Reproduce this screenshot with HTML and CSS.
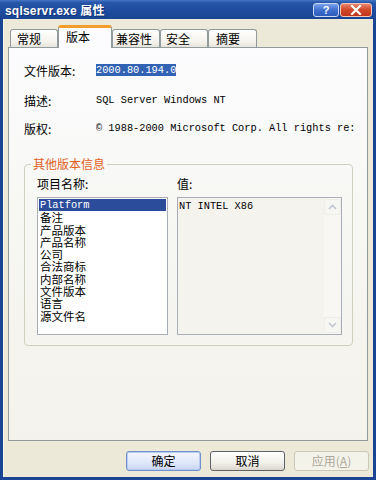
FILE: index.html
```html
<!DOCTYPE html>
<html lang="zh-CN">
<head>
<meta charset="utf-8">
<title>sqlservr.exe 属性</title>
<link rel="stylesheet" href="styles.css">
</head>
<body>
<div class="window">
  <div class="titlebar">
    <span class="title">sqlservr.exe 属性</span>
    <div class="tb-buttons">
      <span class="tb-btn help">?</span>
      <span class="tb-btn close"><svg width="12" height="10" viewBox="0 0 12 10"><path d="M2 1 L10 9 M10 1 L2 9" stroke="#fff" stroke-width="2.2" stroke-linecap="square"/></svg></span>
    </div>
  </div>
  <div class="frame">
    <div class="tabs">
      <div class="tab t1">常规</div>
      <div class="tab active">版本</div>
      <div class="tab t3">兼容性</div>
      <div class="tab t4">安全</div>
      <div class="tab t5">摘要</div>
    </div>
    <div class="panel">
      <div class="info">
        <div class="row r1"><span class="lbl">文件版本:</span><span class="val"><span class="sel">2000.80.194.0</span></span></div>
        <div class="row r2"><span class="lbl">描述:</span><span class="val">SQL Server Windows NT</span></div>
        <div class="row r3"><span class="lbl">版权:</span><span class="val">© 1988-2000 Microsoft Corp. All rights re:</span></div>
      </div>
      <fieldset class="group">
        <legend>其他版本信息</legend>
        <div class="cols">
          <div class="col">
            <div class="col-lbl">项目名称:</div>
            <div class="listbox">
              <div class="item selected">Platform</div>
              <div class="item">备注</div>
              <div class="item">产品版本</div>
              <div class="item">产品名称</div>
              <div class="item">公司</div>
              <div class="item">合法商标</div>
              <div class="item">内部名称</div>
              <div class="item">文件版本</div>
              <div class="item">语言</div>
              <div class="item">源文件名</div>
            </div>
          </div>
          <div class="col">
            <div class="col-lbl">值:</div>
            <div class="valbox">
              <div class="valtext">NT INTEL X86</div>
              <div class="scroll">
                <span class="arrow"><svg width="9" height="6" viewBox="0 0 9 6"><path d="M1 5 L4.5 1.5 L8 5" fill="none" stroke="#c0c7d3" stroke-width="1.6"/></svg></span>
                <span class="arrow"><svg width="9" height="6" viewBox="0 0 9 6"><path d="M1 1 L4.5 4.5 L8 1" fill="none" stroke="#c0c7d3" stroke-width="1.6"/></svg></span>
              </div>
            </div>
          </div>
        </div>
      </fieldset>
    </div>
    <div class="buttons">
      <div class="btn default">确定</div>
      <div class="btn">取消</div>
      <div class="btn disabled">应用(<u>A</u>)</div>
    </div>
  </div>
</div>
</body>
</html>
```

FILE: styles.css
```css
html, body {
  margin: 0;
  padding: 0;
}
body {
  width: 376px;
  height: 480px;
  overflow: hidden;
  font-family: "Noto Sans CJK SC", "Liberation Sans", sans-serif;
  font-size: 12px;
  color: #000;
  background: #1b4495;
}
.window {
  width: 376px;
  height: 480px;
  display: flex;
  flex-direction: column;
}
.titlebar {
  height: 19px;
  flex: none;
  display: flex;
  align-items: center;
  justify-content: space-between;
  padding: 0 4px 0 5px;
  background: linear-gradient(180deg, #4676c6 0%, #2756a8 14%, #1f4c9f 55%, #1a4594 100%);
}
.title {
  color: #fff;
  font-family: "Liberation Sans", "Noto Sans CJK SC", sans-serif;
  font-weight: bold;
  font-size: 12px;
  text-shadow: 1px 1px 0 #0f2f73;
  letter-spacing: 0.2px;
}
.tb-buttons {
  display: flex;
  gap: 1px;
  align-items: center;
}
.tb-btn {
  height: 14px;
  box-sizing: border-box;
  border: 1px solid #e3ebfa;
  border-radius: 3px;
  display: flex;
  align-items: center;
  justify-content: center;
  color: #fff;
  font-family: "Liberation Sans", sans-serif;
  font-weight: bold;
  font-size: 11px;
}
.help {
  width: 26px;
  background: linear-gradient(180deg, #7aa2ec 0%, #3f6fcf 50%, #2e5cbc 100%);
  border-color: #c9d7f2;
}
.close {
  width: 32px;
  background: linear-gradient(180deg, #e8866e 0%, #d24a2c 45%, #c2361b 100%);
  border-color: #f1c5ba;
}
.frame {
  flex: 1;
  display: flex;
  flex-direction: column;
  background: #ece9d8;
  border: 3px solid #1b4495;
  border-top: 0;
  box-shadow: inset 1px 0 #f7f5ea;
}
.tabs {
  display: flex;
  align-items: flex-end;
  height: 22px;
  margin-top: 6px;
  padding-left: 7px;
  position: relative;
  z-index: 2;
}
.tab {
  width: 48px;
  height: 18px;
  box-sizing: border-box;
  border: 1px solid #919b9c;
  border-bottom: 0;
  border-radius: 3px 3px 0 0;
  background: linear-gradient(180deg, #ffffff 0%, #f3f2ec 70%, #e6e4db 100%);
  padding-left: 6px;
  line-height: 17px;
  white-space: nowrap;
}
.t3 { padding-left: 3px; }
.t4 { padding-left: 5px; }
.t5 { width: 49px; padding-left: 7px; }
.tab.active {
  width: 54px;
  height: 23px;
  margin-bottom: -1px;
  background: #fcfcfe;
  border-top: 3px solid #f0a02a;
  padding-left: 7px;
  line-height: 17px;
}
.panel {
  height: 394px;
  box-sizing: border-box;
  margin: 0 5px;
  border: 1px solid #919b9c;
  background: linear-gradient(180deg, #fcfcfe 0%, #f7f7f4 40%, #f3f2ec 100%);
  position: relative;
  z-index: 1;
}
.info {
  padding: 15px 0 0 15px;
}
.row {
  display: flex;
  align-items: center;
  height: 14px;
  white-space: nowrap;
}
.r2 { margin-top: 16px; }
.r3 { margin-top: 14px; }
.lbl {
  width: 72px;
  flex: none;
}
.val {
  font-family: "Liberation Mono", "DejaVu Sans Mono", monospace;
  font-size: 10.3px;
  overflow: hidden;
}
.sel {
  background: #3262b3;
  color: #fff;
  padding: 1px 0;
}
.group {
  margin: 22px 14px 0 15px;
  padding: 6px 10px 10px 12px;
  border: 1px solid #d0d0bf;
  border-radius: 4px;
  min-width: 0;
}
.group legend {
  color: #e2601c;
  padding: 0 2px;
  margin-left: -6px;
  line-height: 14px;
  font-size: 12px;
}
.cols {
  display: grid;
  grid-template-columns: 131px 165px;
  column-gap: 9px;
}
.col-lbl {
  height: 14px;
  line-height: 14px;
}
.listbox {
  margin-top: 6px;
  height: 138px;
  box-sizing: border-box;
  border: 1px solid #a7aeb8;
  background: #fff;
  padding-top: 1px;
}
.item {
  font-size: 11.5px;
  line-height: 12.3px;
  height: 12.3px;
  padding-left: 2px;
  white-space: nowrap;
}
.item.selected {
  margin: 0 1px;
  padding-left: 1px;
  background: #2a4c9b;
  color: #fff;
  font-family: "Liberation Mono", "DejaVu Sans Mono", monospace;
  font-size: 10.3px;
}
.valbox {
  margin-top: 6px;
  height: 138px;
  box-sizing: border-box;
  border: 1px solid #a7aeb8;
  background: #f4f3ee;
  display: flex;
}
.valtext {
  flex: 1;
  padding: 2px 1px;
  font-family: "Liberation Mono", "DejaVu Sans Mono", monospace;
  font-size: 10.3px;
  line-height: 12px;
}
.scroll {
  width: 17px;
  flex: none;
  background: #f8f7f3;
  display: flex;
  flex-direction: column;
  justify-content: space-between;
  padding: 1px 0;
  box-sizing: border-box;
}
.arrow {
  height: 16px;
  box-sizing: border-box;
  border: 1px solid #eeeee8;
  border-radius: 2px;
  background: #f6f6f2;
  display: flex;
  align-items: center;
  justify-content: center;
}
.buttons {
  display: flex;
  justify-content: flex-end;
  gap: 9px;
  margin-top: 10px;
  padding-right: 4px;
}
.btn {
  width: 75px;
  height: 20px;
  box-sizing: border-box;
  border: 1px solid #5e636b;
  border-radius: 3px;
  background: linear-gradient(180deg, #ffffff 0%, #f1f0ea 60%, #dcd7cc 100%);
  line-height: 18px;
  text-align: center;
}
.btn.default {
  border-color: #6f8fd0;
  background: linear-gradient(180deg, #f3f6fd 0%, #dfe7f8 60%, #c9d6f2 100%);
  box-shadow: inset 0 0 0 1px #b9cbf0;
}
.btn.disabled {
  border-color: #cac8bb;
  background: #f4f3ea;
  color: #aca899;
}
.btn u {
  text-decoration: underline;
}
```
